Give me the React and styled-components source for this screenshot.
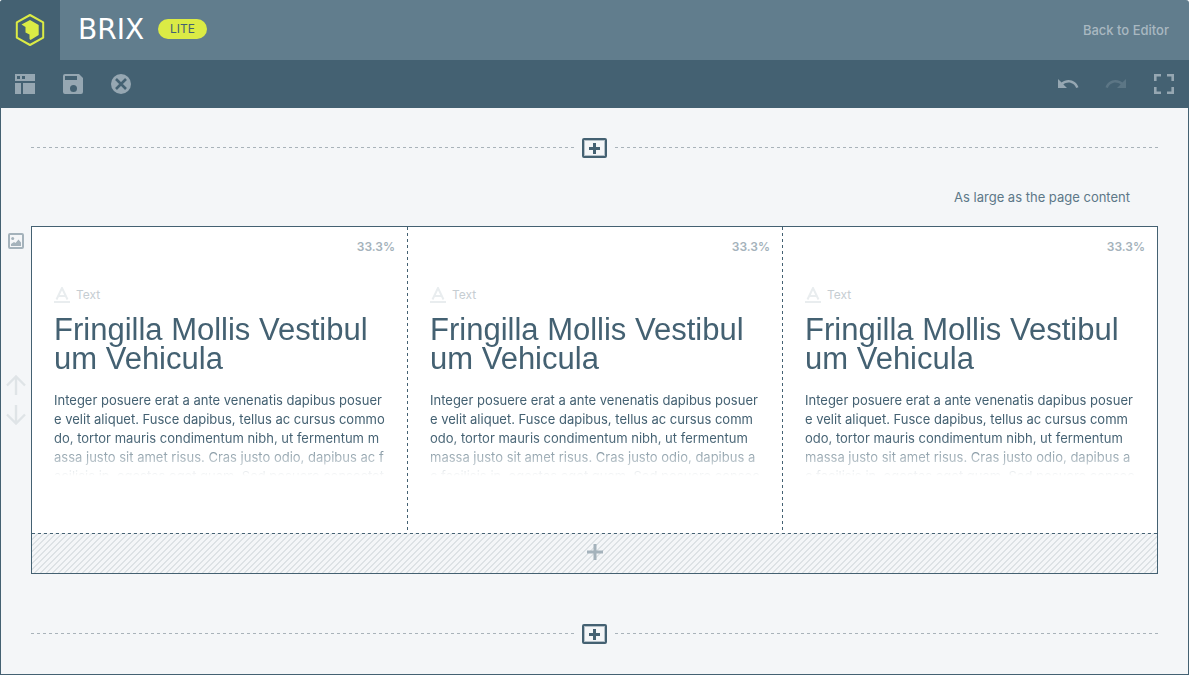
import React from "react";
import styled, { createGlobalStyle } from "styled-components";

const c = {
  dark: "#446172",
  header: "#617d8d",
  page: "#f4f6f8",
  lime: "#dbeb45",
  icon: "#96a7b2",
  muted: "#a4b2bb",
};

const GlobalStyle = createGlobalStyle`
  *, *::before, *::after { box-sizing: border-box; }
  body {
    margin: 0;
    background: #fff;
    color: ${c.dark};
    font: 13px/19px Inter, "Liberation Sans", sans-serif;
  }
  h2, p { margin: 0; font-weight: 400; }
  button { font: inherit; color: inherit; background: none; border: 0; padding: 0; cursor: pointer; }
  svg { display: block; }
`;

const Builder = styled.div`
  border-radius: 3px 3px 0 0;
  overflow: hidden;
`;

const Header = styled.header`
  display: flex;
  align-items: center;
  height: 60px;
  padding-right: 20px;
  background: ${c.header};
`;

const LogoTile = styled.div`
  display: grid;
  place-items: center;
  width: 60px;
  height: 60px;
  background: ${c.dark};
`;

const Wordmark = styled.span`
  width: 80px;
  margin-left: 18px;
  color: #fff;
  font: 28px/30px "DejaVu Sans", sans-serif;
`;

const Badge = styled.span`
  padding: 0 12px;
  margin-bottom: 2px;
  border-radius: 10px;
  background: ${c.lime};
  color: ${c.dark};
  font-size: 12px;
  line-height: 20px;
`;

const BackLink = styled.a`
  margin-left: auto;
  color: #a9b8c1;
  font-weight: 500;
  text-decoration: none;
`;

const Toolbar = styled.div`
  display: flex;
  height: 48px;
  padding: 0 1px;
  background: ${c.dark};
`;

const Spacer = styled.span`
  flex: 1;
`;

const ToolButton = styled.button`
  display: grid;
  place-items: center;
  width: 48px;
  color: ${c.icon};
  opacity: ${(p) => (p.disabled ? 0.3 : 1)};
`;

const Canvas = styled.main`
  padding: 30px 30px;
  border: solid ${c.dark};
  border-width: 0 1px 1px;
  background: ${c.page};
`;

const Adder = styled.div`
  display: flex;
  align-items: center;
  gap: 8px;
  height: 20px;
`;

const DashLine = styled.span`
  flex: 1;
  height: 2px;
  background: repeating-linear-gradient(90deg, #a9b3ba 0 3px, transparent 3px 6px) top / 100% 1px no-repeat;
`;

const AddButton = styled.button`
  display: grid;
  place-items: center;
  width: 25px;
  height: 20px;
  border: 2px solid ${c.dark};
  border-radius: 2px;
  box-shadow: inset 0 0 0 1px #b4c0c8;
`;

const SizeBar = styled.div`
  display: flex;
  justify-content: flex-end;
  padding: 30px 28px 19px;
`;

const SizeButton = styled.button`
  color: #5d7888;
`;

const SectionRow = styled.div`
  display: flex;
  margin-left: -30px;
  margin-bottom: 50px;
`;

const Gutter = styled.aside`
  display: flex;
  flex-direction: column;
  align-items: center;
  width: 30px;
  padding-top: 7px;
`;

const GutterButton = styled.button`
  color: ${(p) => (p.$faint ? "#dfe4e7" : c.muted)};
`;

const MoveGroup = styled.div`
  display: grid;
  gap: 10px;
  margin-top: 126px;
`;

const Section = styled.section`
  flex: 1;
  border: 1px solid ${c.dark};
`;

const Columns = styled.div`
  display: grid;
  grid-template-columns: repeat(3, 1fr);
  background: #fff;
`;

const Column = styled.article`
  min-width: 0;
  height: 306px;
  padding: 10px 12px 0 22px;
  overflow: hidden;
  & + & {
    padding-left: 23px;
    background: repeating-linear-gradient(180deg, ${c.dark} 0 3px, transparent 3px 6px) left / 1px 100% no-repeat;
  }
`;

const Share = styled.div`
  color: ${c.muted};
  font-size: 12px;
  font-weight: 600;
  text-align: right;
`;

const Kind = styled.div`
  display: flex;
  align-items: center;
  gap: 6px;
  margin-top: 29px;
  color: #c6cdd2;
  font-size: 12px;
`;

const Preview = styled.div`
  height: 176px;
  padding-top: 11px;
  overflow: hidden;
  white-space: nowrap;
  mask-image: linear-gradient(#000 134px, transparent 172px);
`;

const Title = styled.h2`
  margin-bottom: 18px;
  font-family: "Liberation Sans", Arial, sans-serif;
  font-size: 31px;
  line-height: 29px;
`;

const Line = styled.span`
  display: block;
`;

const AddStrip = styled.button`
  display: grid;
  place-items: center;
  width: 100%;
  height: 40px;
  padding-bottom: 2px;
  color: ${c.muted};
  background:
    repeating-linear-gradient(90deg, ${c.dark} 0 3px, transparent 3px 6px) top / 100% 1px no-repeat,
    linear-gradient(135deg, #dde2e5 10%, transparent 10% 50%, #dde2e5 50% 60%, transparent 60%) 0 0 / 6px 6px;
`;

const Logo = () => (
  <svg width="30" height="34" viewBox="0 0 30 34" aria-label="Brix">
    <path d="M15 2 28.200 9.300V24.700L15 32 1.800 24.700V9.300Z" fill="none" stroke={c.lime} strokeWidth="2" strokeLinejoin="round" />
    <path d="M15 7 23.700 12V22L15.500 27 14.500 26V21.500L10.500 19.500V14L6.500 11.500Z" fill={c.lime} />
  </svg>
);

const LayoutIcon = () => (
  <svg width="20" height="20" fill="currentColor" aria-hidden="true">
    <path fillRule="evenodd" d="M0 0H20V7H0ZM2 2V5H5V2ZM7 2V5H10V2ZM0 9H6V20H0ZM8 9H20V20H8Z" />
  </svg>
);

const SaveIcon = () => (
  <svg width="20" height="20" fill="currentColor" aria-hidden="true">
    <path fillRule="evenodd" d="M2 0H16L20 4V18Q20 20 18 20H2Q0 20 0 18V2Q0 0 2 0ZM2 2V6H14V2ZM10.500 11A3.500 3.500 0 1 0 10.500 18A3.500 3.500 0 1 0 10.500 11Z" />
  </svg>
);

const CloseIcon = () => (
  <svg width="20" height="20" aria-hidden="true">
    <circle cx="10" cy="10" r="10" fill="currentColor" />
    <path d="M5 5 15 15M15 5 5 15" stroke={c.dark} strokeWidth="2.600" />
  </svg>
);

const UndoIcon = ({ flip }) => (
  <svg width="24" height="24" viewBox="0 0 24 24" fill="currentColor" aria-hidden="true">
    <path
      transform={flip ? "matrix(-1 0 0 1 24 0)" : undefined}
      d="M12.500 8c-2.650 0-5.050.99-6.900 2.600L2 7v9h9l-3.620-3.620c1.390-1.160 3.160-1.880 5.120-1.880 3.540 0 6.550 2.310 7.600 5.500l2.370-.78C21.080 11.030 17.150 8 12.500 8z"
    />
  </svg>
);

const FullscreenIcon = () => (
  <svg width="20" height="20" fill="none" stroke="currentColor" strokeWidth="2.600" aria-hidden="true">
    <path d="M7 1.300H1.300V7M13 1.300H18.700V7M18.700 13V18.700H13M7 18.700H1.300V13" />
  </svg>
);

const PictureIcon = () => (
  <svg width="16" height="16" aria-hidden="true">
    <rect x="1" y="1" width="14" height="14" rx="1" fill="none" stroke="currentColor" strokeWidth="2" />
    <circle cx="4.700" cy="5.500" r="1.500" fill="currentColor" />
    <path d="M3 13V11L6 9 7.500 10 10.500 6.500 13 9.500V13Z" fill="currentColor" />
  </svg>
);

const ArrowIcon = ({ down }) => (
  <svg width="20" height="20" fill="none" stroke="currentColor" strokeWidth="2.400" aria-hidden="true">
    <path d={down ? "M10 0V18M1 9.500 10 18.500 19 9.500" : "M10 20V2M1 10.500 10 1.500 19 10.500"} />
  </svg>
);

const PlusIcon = ({ size, weight }) => (
  <svg width={size} height={size} viewBox={`0 0 ${size} ${size}`} stroke="currentColor" strokeWidth={weight} aria-hidden="true">
    <path d={`M${size / 2} 0V${size}M0 ${size / 2}H${size}`} />
  </svg>
);

const TextIcon = () => (
  <svg width="16" height="16" fill="none" stroke="#e9edef" strokeWidth="2" aria-hidden="true">
    <path d="M2.500 12.500 8 1 13.500 12.500M4.500 9H11.500M0 15H16" />
  </svg>
);

const title = ["Fringilla Mollis Vestibul", "um Vehicula"];

const narrow = [
  "Integer posuere erat a ante venenatis dapibus posuer",
  "e velit aliquet. Fusce dapibus, tellus ac cursus commo",
  "do, tortor mauris condimentum nibh, ut fermentum m",
  "assa justo sit amet risus. Cras justo odio, dapibus ac f",
  "acilisis in, egestas eget quam. Sed posuere consectet",
];

const wide = [
  "Integer posuere erat a ante venenatis dapibus posuer",
  "e velit aliquet. Fusce dapibus, tellus ac cursus comm",
  "odo, tortor mauris condimentum nibh, ut fermentum",
  "massa justo sit amet risus. Cras justo odio, dapibus a",
  "c facilisis in, egestas eget quam. Sed posuere consec",
];

const columns = [narrow, wide, wide];

const AddRow = () => (
  <Adder>
    <DashLine />
    <AddButton type="button" aria-label="Add section">
      <PlusIcon size={11} weight={3} />
    </AddButton>
    <DashLine />
  </Adder>
);

export default function App() {
  return (
    <>
      <GlobalStyle />
      <Builder>
        <Header>
          <LogoTile>
            <Logo />
          </LogoTile>
          <Wordmark>BRIX</Wordmark>
          <Badge>LITE</Badge>
          <BackLink href="#editor">Back to Editor</BackLink>
        </Header>
        <Toolbar>
          <ToolButton type="button" aria-label="Templates"><LayoutIcon /></ToolButton>
          <ToolButton type="button" aria-label="Save"><SaveIcon /></ToolButton>
          <ToolButton type="button" aria-label="Clear"><CloseIcon /></ToolButton>
          <Spacer />
          <ToolButton type="button" aria-label="Undo"><UndoIcon /></ToolButton>
          <ToolButton type="button" aria-label="Redo" disabled><UndoIcon flip /></ToolButton>
          <ToolButton type="button" aria-label="Full screen"><FullscreenIcon /></ToolButton>
        </Toolbar>
        <Canvas>
          <AddRow />
          <SizeBar>
            <SizeButton type="button">As large as the page content</SizeButton>
          </SizeBar>
          <SectionRow>
            <Gutter>
              <GutterButton type="button" aria-label="Background"><PictureIcon /></GutterButton>
              <MoveGroup>
                <GutterButton type="button" $faint aria-label="Move up"><ArrowIcon /></GutterButton>
                <GutterButton type="button" $faint aria-label="Move down"><ArrowIcon down /></GutterButton>
              </MoveGroup>
            </Gutter>
            <Section>
              <Columns>
                {columns.map((lines, i) => (
                  <Column key={i}>
                    <Share>33.3%</Share>
                    <Kind><TextIcon />Text</Kind>
                    <Preview>
                      <Title>{title.map((t) => <Line key={t}>{t}</Line>)}</Title>
                      <p>{lines.map((t) => <Line key={t}>{t}</Line>)}</p>
                    </Preview>
                  </Column>
                ))}
              </Columns>
              <AddStrip type="button" aria-label="Add row"><PlusIcon size={16} weight={3} /></AddStrip>
            </Section>
          </SectionRow>
          <AddRow />
        </Canvas>
      </Builder>
    </>
  );
}
